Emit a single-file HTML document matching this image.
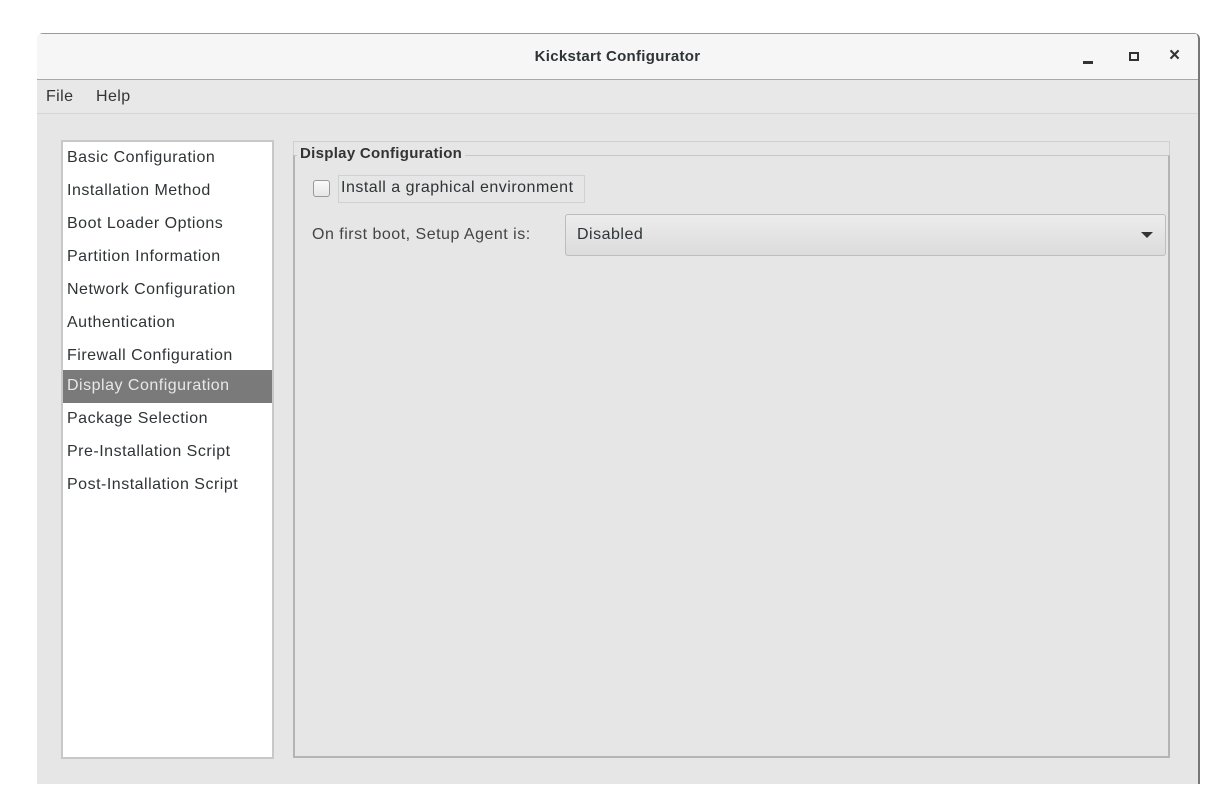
<!DOCTYPE html>
<html><head><meta charset="utf-8"><style>
*{margin:0;padding:0;box-sizing:border-box}
body{width:1229px;height:809px;background:#fff;position:relative;overflow:hidden;font-family:"Liberation Sans",sans-serif;color:#2e3436}
.win{position:absolute;left:37px;top:33px;width:1163px;height:751px;background:#e6e6e6;border-right:2px solid #777;border-radius:6px 6px 0 0;overflow:hidden}
.title{position:absolute;left:0;top:0;width:100%;height:47px;background:#f6f6f6;border-bottom:1px solid #a8a8a8;border-top:1px solid #999}
.title .t{position:absolute;left:0;right:0;top:14px;text-align:center;font-weight:bold;font-size:15px;color:#2e3436;letter-spacing:0.3px}
.menu{position:absolute;left:0;top:47px;width:100%;height:34px;background:#e8e8e8;border-bottom:1px solid #d6d6d6;font-size:16px;color:#333;letter-spacing:0.4px}
.abs{position:absolute}
.list{position:absolute;left:24px;top:107px;width:213px;height:619px;background:#fff;border:2px solid #c8c8c8}
.item{position:absolute;left:4px;font-size:16px;color:#2e3436;white-space:nowrap;letter-spacing:0.5px}
.sel{position:absolute;left:0;top:228px;width:209px;height:33px;background:#7a7a7a}
.frame{position:absolute;left:256px;top:108px;width:877px;height:617px;border:1px solid #cfcfcf}
.frame2{position:absolute;left:256px;top:122px;width:877px;height:603px;border:2px solid #b4b4b4;border-top:1px solid #c8c8c8}
.txt{font-size:16px;letter-spacing:0.5px}
</style></head><body>
<div class="win">
 <div class="title"><div class="t">Kickstart Configurator</div>
  <div class="abs" style="left:1046px;top:27px;width:10px;height:3px;background:#333"></div>
  <div class="abs" style="left:1092px;top:18px;width:10px;height:9px;border:2px solid #333"></div>
  <div class="abs" style="left:1132px;top:11px;font-size:19px;font-weight:bold;color:#333">×</div>
 </div>
 <div class="menu"><span class="abs" style="left:9px;top:8px">File</span><span class="abs" style="left:59px;top:8px">Help</span></div>
 <div class="list">
  <div class="sel"></div>
  <div class="item" style="top:7px">Basic Configuration</div>
  <div class="item" style="top:40px">Installation Method</div>
  <div class="item" style="top:73px">Boot Loader Options</div>
  <div class="item" style="top:106px">Partition Information</div>
  <div class="item" style="top:139px">Network Configuration</div>
  <div class="item" style="top:172px">Authentication</div>
  <div class="item" style="top:205px">Firewall Configuration</div>
  <div class="item" style="top:235px;color:#e8e8e8">Display Configuration</div>
  <div class="item" style="top:268px">Package Selection</div>
  <div class="item" style="top:301px">Pre-Installation Script</div>
  <div class="item" style="top:334px">Post-Installation Script</div>
 </div>
 <div class="frame"></div>
 <div class="frame2"></div>
 <div class="abs" style="left:260px;top:112px;padding:0 3px;background:#e6e6e6;font-weight:bold;font-size:15px;color:#333;letter-spacing:0.3px">Display Configuration</div>
 <div class="abs" style="left:276px;top:147px;width:17px;height:17px;border:1px solid #999;border-radius:3px;background:linear-gradient(#fafafa,#e6e6e6)"></div>
 <div class="abs" style="left:301px;top:142px;width:247px;height:28px;border:1px solid #d0d0d0"></div>
 <div class="abs txt" style="left:304px;top:146px;color:#2e3436">Install a graphical environment</div>
 <div class="abs txt" style="left:275px;top:193px;color:#444">On first boot, Setup Agent is:</div>
 <div class="abs" style="left:528px;top:181px;width:601px;height:42px;border:1px solid #bdbdbd;border-radius:3px;background:linear-gradient(#ececec,#dcdcdc)"></div>
 <div class="abs txt" style="left:540px;top:193px;color:#2e3436">Disabled</div>
 <div class="abs" style="left:1104px;top:199px;width:0;height:0;border-left:6px solid transparent;border-right:6px solid transparent;border-top:6px solid #333"></div>
</div>
</body></html>
